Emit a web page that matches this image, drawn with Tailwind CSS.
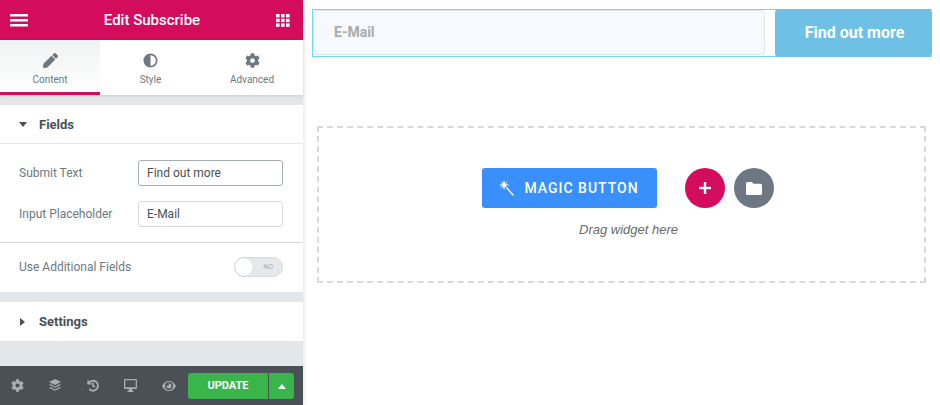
<!DOCTYPE html>
<html lang="en">
<head>
    <meta charset="UTF-8">
    <title>Edit Subscribe</title>
    <script src="https://cdn.jsdelivr.net/npm/@tailwindcss/browser@4"></script>
</head>
<body class="bg-white font-['Roboto',sans-serif] overflow-hidden">
<div class="flex w-[940px] h-[405px]">

    <!-- panel -->
    <aside class="relative z-10 w-[303px] h-full flex flex-col bg-[#e4e7ea] shadow-[1px_0_5px_rgba(0,0,0,0.1)] shrink-0">
        <header class="h-10 bg-[#d30c5c] flex items-center justify-between pl-[10px] pr-[13px] text-white">
            <svg width="18" height="13" viewBox="0 0 18 13" fill="#fff"><rect y="0" width="18" height="2.6" rx="0.5"/><rect y="5" width="18" height="2.6" rx="0.5"/><rect y="10" width="18" height="2.6" rx="0.5"/></svg>
            <span class="text-[15px] font-medium">Edit Subscribe</span>
            <svg width="14" height="13" viewBox="0 0 14 13" fill="#fff">
                <rect x="0" y="0" width="3.6" height="3.4"/><rect x="5" y="0" width="3.6" height="3.4"/><rect x="10" y="0" width="3.6" height="3.4"/>
                <rect x="0" y="4.7" width="3.6" height="3.4"/><rect x="5" y="4.7" width="3.6" height="3.4"/><rect x="10" y="4.7" width="3.6" height="3.4"/>
                <rect x="0" y="9.4" width="3.6" height="3.4"/><rect x="5" y="9.4" width="3.6" height="3.4"/><rect x="10" y="9.4" width="3.6" height="3.4"/>
            </svg>
        </header>

        <nav class="h-[55px] flex bg-white shadow-[0_1px_3px_rgba(0,0,0,0.1)] text-[10px] text-[#6d7882]">
            <div class="w-[100px] flex flex-col items-center pt-[13px] border-b-[3px] border-[#d30c5c] bg-gradient-to-b from-[#f1f2f3] to-white">
                <svg width="15" height="15" viewBox="0 0 512 512" fill="#6d7882"><path d="M290.74 93.24l128.02 128.02-277.99 277.99-114.14 12.6C11.35 513.54-1.56 500.62.14 485.34l12.7-114.22 277.9-277.88zm207.2-19.06l-60.11-60.11c-18.75-18.75-49.16-18.75-67.91 0l-56.55 56.55 128.02 128.02 56.55-56.55c18.75-18.76 18.75-49.16 0-67.91z"/></svg>
                <span class="mt-[6px] leading-[12px]">Content</span>
            </div>
            <div class="w-[101px] flex flex-col items-center pt-[13px]">
                <svg width="15" height="15" viewBox="0 0 16 16"><circle cx="8" cy="8" r="6.6" fill="none" stroke="#6d7882" stroke-width="1.8"/><path d="M8 1.4a6.6 6.6 0 0 0 0 13.2z" fill="#6d7882"/></svg>
                <span class="mt-[6px] leading-[12px]">Style</span>
            </div>
            <div class="w-[102px] flex flex-col items-center pt-[13px]">
                <svg width="15" height="15" viewBox="0 0 512 512" fill="#6d7882"><path d="M487.4 315.7l-42.6-24.6c4.3-23.2 4.3-47 0-70.2l42.6-24.6c4.9-2.8 7.1-8.6 5.5-14-11.1-35.6-30-67.8-54.7-94.6-3.8-4.1-10-5.1-14.8-2.3L380.8 110c-17.9-15.4-38.5-27.3-60.8-35.1V25.8c0-5.6-3.9-10.5-9.4-11.7-36.7-8.2-74.3-7.8-109.2 0-5.5 1.2-9.4 6.1-9.4 11.7V75c-22.2 7.9-42.8 19.8-60.8 35.1L88.7 85.5c-4.9-2.8-11-1.9-14.8 2.3-24.7 26.7-43.6 58.9-54.7 94.6-1.7 5.4.6 11.2 5.5 14L67.3 221c-4.3 23.2-4.3 47 0 70.2l-42.6 24.6c-4.9 2.8-7.1 8.6-5.5 14 11.1 35.6 30 67.8 54.7 94.6 3.8 4.1 10 5.1 14.8 2.3l42.6-24.6c17.9 15.4 38.5 27.3 60.8 35.1v49.2c0 5.6 3.9 10.5 9.4 11.7 36.7 8.2 74.3 7.8 109.2 0 5.5-1.2 9.4-6.1 9.4-11.7v-49.2c22.2-7.9 42.8-19.8 60.8-35.1l42.6 24.6c4.9 2.8 11 1.9 14.8-2.3 24.7-26.7 43.6-58.9 54.7-94.6 1.5-5.5-.7-11.3-5.6-14.1zM256 336c-44.1 0-80-35.9-80-80s35.9-80 80-80 80 35.9 80 80-35.9 80-80 80z"/></svg>
                <span class="mt-[6px] leading-[12px]">Advanced</span>
            </div>
        </nav>

        <section class="mt-[10px] bg-white h-[187px] flex flex-col">
            <div class="h-[39px] flex items-center pl-[19px] pt-[1px] border-b border-[#e6e9ec] shrink-0">
                <svg width="8" height="5" viewBox="0 0 8 5" fill="#495157"><path d="M0 0h8L4 5z"/></svg>
                <span class="ml-3 text-[13px] font-bold text-[#495157]">Fields</span>
            </div>
            <div class="flex items-center justify-between pl-[19px] pr-5 mt-[16px]">
                <span class="text-[12px] text-[#6d7882]">Submit Text</span>
                <input class="w-[145px] h-[26px] px-2 text-[12px] text-[#495157] border border-[#a4afb7] rounded-[3px] font-['Roboto',sans-serif]" value="Find out more">
            </div>
            <div class="flex items-center justify-between pl-[19px] pr-5 mt-[15px]">
                <span class="text-[12px] text-[#6d7882]">Input Placeholder</span>
                <input class="w-[145px] h-[26px] px-2 text-[12px] text-[#495157] border border-[#d5dadf] rounded-[3px] font-['Roboto',sans-serif]" value="E-Mail">
            </div>
            <div class="mt-[15px] border-t border-[#d5dadf] flex items-center justify-between pl-[19px] pr-5 pt-[14px]">
                <span class="text-[12px] text-[#6d7882]">Use Additional Fields</span>
                <div class="relative w-[49px] h-[20px] rounded-full bg-[#e6e9ec] border border-[#d5dadf] text-[7px] text-[#a4afb7]">
                    <span class="absolute left-0 top-0 w-[18px] h-[18px] rounded-full bg-white shadow-[0_0_1px_rgba(0,0,0,0.2)]"></span>
                    <span class="absolute right-[9px] top-[5px] leading-[8px]">NO</span>
                </div>
            </div>
        </section>

        <section class="mt-[10px] bg-white h-[39px] flex items-center pl-[20px]">
            <svg width="5" height="8" viewBox="0 0 5 8" fill="#495157"><path d="M0 0l5 4-5 4z"/></svg>
            <span class="ml-[14px] text-[13px] font-bold text-[#495157]">Settings</span>
        </section>

        <footer class="mt-auto h-[39px] bg-[#495157] flex items-center text-[#a4afb7] relative">
            <svg class="absolute left-[11px] top-[13px]" width="13" height="13" viewBox="0 0 512 512" fill="#a4afb7"><path d="M487.4 315.7l-42.6-24.6c4.3-23.2 4.3-47 0-70.2l42.6-24.6c4.9-2.8 7.1-8.6 5.5-14-11.1-35.6-30-67.8-54.7-94.6-3.8-4.1-10-5.1-14.8-2.3L380.8 110c-17.9-15.4-38.5-27.3-60.8-35.1V25.8c0-5.6-3.9-10.5-9.4-11.7-36.7-8.2-74.3-7.8-109.2 0-5.5 1.2-9.4 6.1-9.4 11.7V75c-22.2 7.9-42.8 19.8-60.8 35.1L88.7 85.5c-4.9-2.8-11-1.9-14.8 2.3-24.7 26.7-43.6 58.9-54.7 94.6-1.7 5.4.6 11.2 5.5 14L67.3 221c-4.3 23.2-4.3 47 0 70.2l-42.6 24.6c-4.9 2.8-7.1 8.6-5.5 14 11.1 35.6 30 67.8 54.7 94.6 3.8 4.1 10 5.1 14.8 2.3l42.6-24.6c17.9 15.4 38.5 27.3 60.8 35.1v49.2c0 5.6 3.9 10.5 9.4 11.7 36.7 8.2 74.3 7.8 109.2 0 5.5-1.2 9.4-6.1 9.4-11.7v-49.2c22.2-7.9 42.8-19.8 60.8-35.1l42.6 24.6c4.9 2.8 11 1.9 14.8-2.3 24.7-26.7 43.6-58.9 54.7-94.6 1.5-5.5-.7-11.3-5.6-14.1zM256 336c-44.1 0-80-35.9-80-80s35.9-80 80-80 80 35.9 80 80-35.9 80-80 80z"/></svg>
            <svg class="absolute left-[49px] top-[13px]" width="12" height="13" viewBox="0 0 12 13" fill="#a4afb7"><path d="M6 0l6 3-6 3-6-3z"/><path d="M1.300 5.100L6 7.400l4.700-2.300L12 5.800 6 8.800 0 5.800z"/><path d="M1.300 8.100L6 10.400l4.700-2.300L12 8.800 6 11.800 0 8.800z"/></svg>
            <svg class="absolute left-[87px] top-[13px]" width="12" height="13" viewBox="0 0 12 13" fill="none" stroke="#a4afb7" stroke-width="1.800"><path d="M1.200 1.500v3h3"/><path d="M1.800 4a5 5 0 1 1 .4 6"/><path d="M6 3.800v3l1.900 1.200"/></svg>
            <svg class="absolute left-[124px] top-[13px]" width="13" height="13" viewBox="0 0 13 13" fill="#a4afb7"><path fill-rule="evenodd" d="M1 0h11a1 1 0 0 1 1 1v8a1 1 0 0 1-1 1H8l.4 1.700h1.100V13h-6v-1.300h1.100L5 10H1a1 1 0 0 1-1-1V1a1 1 0 0 1 1-1zm.3 1.300v6.900h10.400V1.300z"/></svg>
            <svg class="absolute left-[162px] top-[15px]" width="14" height="10" viewBox="0 0 14 10" fill="#a4afb7"><path fill-rule="evenodd" d="M7 0c3 0 5.600 2 7 5-1.400 3-4 5-7 5S1.400 8 0 5c1.400-3 4-5 7-5zm0 1a4 4 0 1 0 0 8 4 4 0 0 0 0-8zm0 1.500a2.500 2.500 0 1 1-2.500 2.500c0-.4.100-.8.300-1.100a1 1 0 1 0 1.300-1.200c.3-.1.600-.2.900-.2z"/></svg>
            <div class="absolute left-[188px] top-[7px] w-[106px] h-[26px] flex rounded-[3px] bg-[#39b54a] text-white">
                <span class="w-[81px] flex items-center justify-center pt-[1px] text-[11px] font-bold border-r border-[#495157]">UPDATE</span>
                <span class="flex-1 flex items-center justify-center">
                    <svg width="8" height="5" viewBox="0 0 8 5" fill="#fff"><path d="M4 0l4 5H0z"/></svg>
                </span>
            </div>
        </footer>
    </aside>

    <!-- preview -->
    <main class="flex-1 pl-[9px] pr-2 pt-[9px]">
        <div class="h-[48px] w-[620px] flex items-stretch border-y border-l border-[#71d7f7] pb-[1px]">
            <div class="w-[452px] flex items-center pl-5 bg-[#f6f9fd] border border-[#e0e3e8] rounded-[4px] text-[14px] font-bold text-[#aaaaaa]">E-Mail</div>
            <div class="ml-[10px] -my-[1px] -mb-[2px] w-[157px] flex items-center justify-center pl-[2px] rounded-[4px] bg-[#6ec1e4] text-white text-[16px] font-bold">Find out more</div>
        </div>

        <div class="ml-[5px] mt-[69px] w-[609px] h-[157px] border-2 border-dashed border-[#d5dadf] flex flex-col items-center pt-10 pl-3">
            <div class="flex items-center">
                <div class="w-[175px] h-10 rounded-[3px] bg-[#398ffc] flex items-center justify-center text-white text-[14px] font-medium tracking-[1px]">
                    <svg class="mr-[10px]" width="15" height="16" viewBox="0 0 15 16"><g stroke="#fff" stroke-width="1" fill="none"><path d="M5 .5v9M.5 5h9M1.800 1.800l6.400 6.400M8.200 1.800L1.800 8.200"/><path d="M7.500 7.500l7 8" stroke-width="1.400"/></g><circle cx="5" cy="5" r="2.400" fill="#fff"/></svg>
                    MAGIC BUTTON
                </div>
                <div class="ml-7 w-10 h-10 rounded-full bg-[#d30c5c] flex items-center justify-center">
                    <svg width="12" height="12" viewBox="0 0 12 12" fill="#fff"><rect x="4.800" width="2.400" height="12"/><rect y="4.800" width="12" height="2.400"/></svg>
                </div>
                <div class="ml-[9px] w-10 h-10 rounded-full bg-[#6d7882] flex items-center justify-center">
                    <svg width="16" height="13" viewBox="0 0 16 13" fill="#fff"><path d="M1.500 0h4.300l1.700 1.800h7A1.500 1.500 0 0 1 16 3.300v8.200a1.500 1.500 0 0 1-1.500 1.500h-13A1.500 1.500 0 0 1 0 11.500v-10A1.500 1.500 0 0 1 1.500 0z"/></svg>
                </div>
            </div>
            <p class="mt-[14px] ml-[2px] text-[13px] leading-[15px] italic text-[#666b70] font-['Liberation_Sans',sans-serif]">Drag widget here</p>
        </div>
    </main>
</div>
</body>
</html>
